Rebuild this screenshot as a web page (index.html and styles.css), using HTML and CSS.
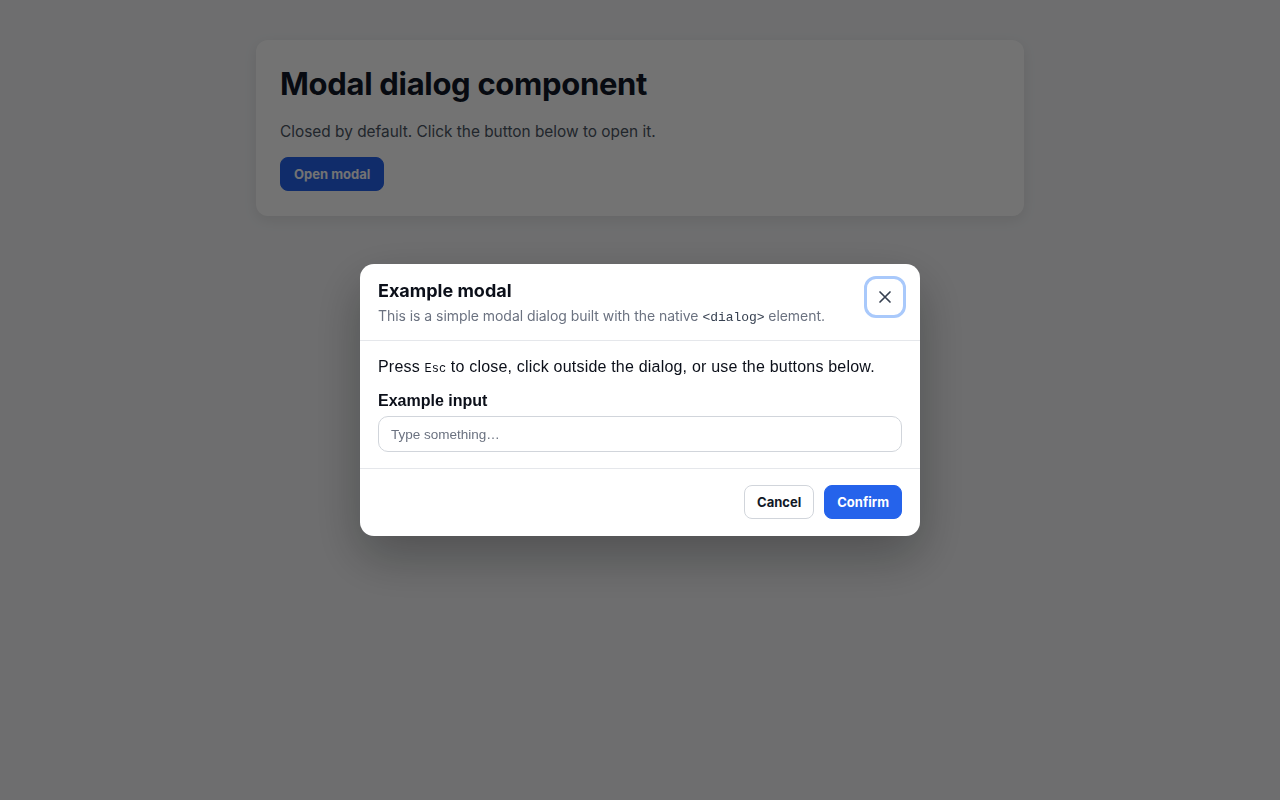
FILE: index.html
```html
<!DOCTYPE html>
<html lang="en">
<head>
<meta charset="utf-8">
<title>Modal dialog component</title>
<link rel="stylesheet" href="styles.css">
</head>
<body>
<main class="page">
  <section class="card">
    <h1 class="card-title">Modal dialog component</h1>
    <p class="card-text">Closed by default. Click the button below to open it.</p>
    <button class="btn btn-primary btn-open" type="button">Open modal</button>
  </section>
</main>
<div class="backdrop">
  <div class="dialog" role="dialog" aria-modal="true" aria-labelledby="dlg-title">
    <header class="dialog-header">
      <div class="dialog-heading">
        <h2 class="dialog-title" id="dlg-title">Example modal</h2>
        <p class="dialog-sub">This is a simple modal dialog built with the native <code class="code">&lt;dialog&gt;</code> element.</p>
      </div>
      <button class="close-btn" type="button" aria-label="Close">
        <svg width="14" height="14" viewBox="0 0 14 14" fill="none" stroke="#374151" stroke-width="1.7" stroke-linecap="round"><path d="M2 2l10 10M12 2L2 12"/></svg>
      </button>
    </header>
    <div class="dialog-body">
      <p class="body-text">Press <kbd class="kbd">Esc</kbd> to close, click outside the dialog, or use the buttons below.</p>
      <label class="field-label" for="ex-input">Example input</label>
      <input class="field-input" id="ex-input" type="text" placeholder="Type something…">
    </div>
    <footer class="dialog-footer">
      <button class="btn btn-secondary" type="button">Cancel</button>
      <button class="btn btn-primary" type="button">Confirm</button>
    </footer>
  </div>
</div>
</body>
</html>
```
FILE: styles.css
```css
* { box-sizing: border-box; }
html, body { margin: 0; height: 100%; }
body {
  background: #f3f4f6;
  font-family: Inter, "Liberation Sans", sans-serif;
  color: #111827;
}
.page {
  display: flex;
  justify-content: center;
  padding-top: 40px;
}
.card {
  width: 768px;
  background: #ffffff;
  border-radius: 12px;
  padding: 24px 24px 25px;
  box-shadow: 0 4px 14px rgba(0,0,0,0.08);
}
.card-title {
  margin: 2px 0 0;
  font-size: 31px;
  line-height: 36px;
  font-weight: 700;
  letter-spacing: -0.01em;
  color: #111827;
}
.card-text {
  margin: 18px 0 13px;
  font-size: 15.4px;
  line-height: 24px;
  color: #4b5563;
}
.btn {
  height: 34px;
  padding: 0 12px;
  border-radius: 8px;
  font-family: Inter, "Liberation Sans", sans-serif;
  font-size: 13px;
  font-weight: 700;
  cursor: pointer;
}
.btn-primary {
  background: #2563eb;
  color: #ffffff;
  border: 1px solid #2563eb;
}
.btn-secondary {
  background: #ffffff;
  color: #111827;
  border: 1px solid #d1d5db;
}
.btn-open { padding: 0 13px; }

.backdrop {
  position: fixed;
  inset: 0;
  background: rgba(0,0,0,0.55);
  display: flex;
  align-items: center;
  justify-content: center;
}
.dialog {
  width: 560px;
  background: #ffffff;
  border-radius: 14px;
  box-shadow: 0 20px 50px rgba(0,0,0,0.28);
  overflow: hidden;
}
.dialog-header {
  display: flex;
  justify-content: space-between;
  align-items: flex-start;
  padding: 15px 14px 12px 18px;
  border-bottom: 1px solid #e5e7eb;
}
.dialog-title {
  margin: 0;
  font-size: 18px;
  line-height: 24px;
  font-weight: 700;
  color: #0b0f19;
}
.dialog-sub {
  margin: 3px 0 0;
  font-size: 14px;
  line-height: 20px;
  color: #6b7280;
  letter-spacing: -0.05px;
}
.code {
  font-family: "Liberation Mono", "DejaVu Sans Mono", monospace;
  font-size: 13px;
  color: #374151;
}
.close-btn {
  flex: 0 0 42px;
  width: 42px;
  height: 42px;
  margin-top: -3px;
  display: flex;
  align-items: center;
  justify-content: center;
  background: #ffffff;
  border: 3px solid #a9c9fb;
  border-radius: 12px;
  padding: 0;
  cursor: pointer;
}
.dialog-body {
  padding: 14px 18px 16px;
  border-bottom: 1px solid #e5e7eb;
  font-family: "Liberation Sans", Arial, sans-serif;
}
.body-text {
  margin: 0;
  font-size: 16px;
  line-height: 24px;
  letter-spacing: 0.2px;
  color: #0b0f19;
}
.kbd {
  font-family: "Liberation Mono", "DejaVu Sans Mono", monospace;
  font-size: 12px;
  letter-spacing: 0;
}
.field-label {
  display: block;
  margin-top: 8px;
  font-size: 16px;
  line-height: 24px;
  font-weight: 700;
  color: #0b0f19;
}
.field-input {
  display: block;
  width: 100%;
  height: 36px;
  margin-top: 3px;
  padding: 0 12px;
  border: 1px solid #d1d5db;
  border-radius: 10px;
  font-family: "Liberation Sans", Arial, sans-serif;
  font-size: 13.5px;
  color: #111827;
  background: #ffffff;
  outline: none;
}
.field-input::placeholder { color: #6b7280; }
.dialog-footer {
  display: flex;
  justify-content: flex-end;
  gap: 10px;
  padding: 16px 18px 17px;
}
```
